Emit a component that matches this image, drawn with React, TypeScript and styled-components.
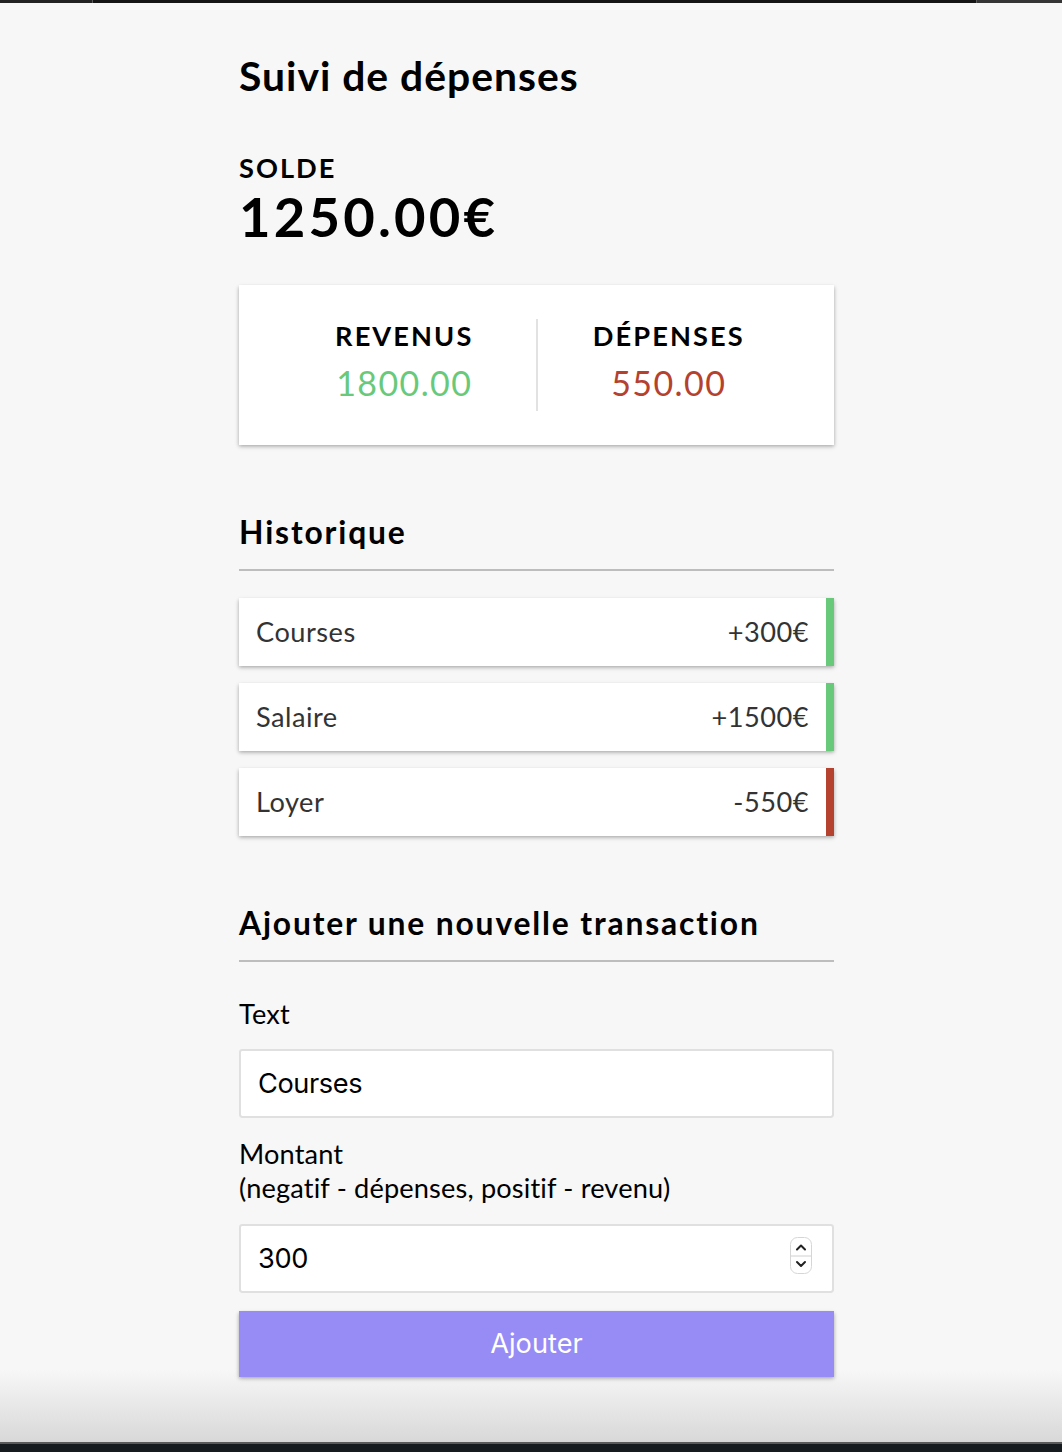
import React from 'react';
import styled, { createGlobalStyle } from 'styled-components';

const GlobalStyle = createGlobalStyle`
  * { box-sizing: border-box; }
  html, body { margin: 0; padding: 0; }
  body {
    background: #f7f7f7;
    font-family: Lato, "Noto Sans", sans-serif;
    color: #000;
  }
  input::-webkit-outer-spin-button,
  input::-webkit-inner-spin-button { -webkit-appearance: none; margin: 0; }
`;

const Page = styled.div`
  min-height: 1452px;
  display: flex;
  flex-direction: column;
`;

const TopBar = styled.div`
  height: 3px;
  flex-shrink: 0;
  display: flex;
  background: #151515;
`;

const TopSeg = styled.div<{ $w?: number; $c: string; $edge?: 'left' | 'right' }>`
  height: 100%;
  background: ${(p) => p.$c};
  ${(p) => (p.$w ? `width: ${p.$w}px; flex-shrink: 0;` : 'flex: 1;')}
  ${(p) => (p.$edge === 'left' ? 'border-right: 1px solid #5a5a5a;' : '')}
  ${(p) => (p.$edge === 'right' ? 'border-left: 1px solid #5a5a5a;' : '')}
`;

const Main = styled.main`
  flex: 1;
  padding-left: 11px;
  background: linear-gradient(
    to bottom,
    #f7f7f7 0,
    #f7f7f7 calc(100% - 72px),
    #d8d8d8 100%
  );
`;

const BottomBar = styled.div`
  height: 10px;
  flex-shrink: 0;
  background: #161b20;
  border-top: 2px solid #5a5a5a;
`;

const Container = styled.div`
  width: 595px;
  margin: 0 auto;
  padding: 48px 0 40px;
`;

const Title = styled.h2`
  margin: 0;
  font-size: 40.8px;
  line-height: 49px;
  font-weight: 700;
  letter-spacing: 1px;
`;

const BalanceLabel = styled.h4`
  margin: 51px 0 0;
  font-size: 27.2px;
  line-height: 33px;
  font-weight: 700;
  text-transform: uppercase;
  letter-spacing: 2px;
`;

const Balance = styled.h1`
  margin: 0;
  font-size: 54.4px;
  line-height: 65px;
  letter-spacing: 3.2px;
  font-weight: 700;
`;

const shadow = '0 1.7px 5.1px rgba(0, 0, 0, 0.12), 0 1.7px 3.4px rgba(0, 0, 0, 0.24)';

const Card = styled.div`
  margin-top: 36px;
  background: #fff;
  box-shadow: ${shadow};
  padding: 34px;
  display: flex;
`;

const Stat = styled.div<{ $divider?: boolean }>`
  flex: 1;
  text-align: center;
  border-right: ${(p) => (p.$divider ? '2px solid #e2e2e2' : 'none')};
`;

const StatLabel = styled.h4`
  margin: 0;
  font-size: 27.2px;
  line-height: 34px;
  font-weight: 700;
  text-transform: uppercase;
  letter-spacing: 2.1px;
`;

const Money = styled.p<{ $tone: 'plus' | 'minus' }>`
  margin: 8.5px 0;
  font-size: 34px;
  line-height: 41px;
  letter-spacing: 1.4px;
  color: ${(p) => (p.$tone === 'plus' ? '#69c97b' : '#b5412f')};
`;

const SectionTitle = styled.h3`
  margin: 68px 0 0;
  font-size: 31.8px;
  line-height: 38px;
  font-weight: 700;
  padding-bottom: 18px;
  border-bottom: 2px solid #bdbdbd;
  letter-spacing: 1.85px;
`;

const List = styled.ul`
  list-style: none;
  padding: 0;
  margin: 27px 0 0;
  display: flex;
  flex-direction: column;
  gap: 17px;
`;

const Item = styled.li<{ $tone: 'plus' | 'minus' }>`
  height: 68px;
  background: #fff;
  box-shadow: ${shadow};
  color: #333;
  display: flex;
  justify-content: space-between;
  align-items: center;
  padding: 0 17px;
  font-size: 27.2px;
  line-height: 34px;
  letter-spacing: 0.5px;
  border-right: 8.5px solid ${(p) => (p.$tone === 'plus' ? '#69c97b' : '#b5412f')};
`;

const Form = styled.form`
  margin: 0;
`;

const Label = styled.label<{ $mt: number; $mb: number }>`
  display: block;
  margin: ${(p) => p.$mt}px 0 ${(p) => p.$mb}px;
  font-size: 27.2px;
  line-height: 33.3px;
  letter-spacing: 0.15px;
`;

const Input = styled.input`
  display: block;
  width: 100%;
  height: 69px;
  border: 2px solid #e0e0e0;
  border-radius: 3.4px;
  padding: 0 17px;
  font-family: Inter, "Noto Sans", sans-serif;
  font-size: 27.2px;
  letter-spacing: -0.4px;
  color: #000;
  background: #fff;
  outline: none;
  -moz-appearance: textfield;
`;

const NumberWrap = styled.div`
  position: relative;
`;

const Spinner = styled.svg`
  position: absolute;
  right: 22px;
  top: 13px;
  width: 22px;
  height: 37px;
  pointer-events: none;
`;

const Button = styled.button`
  display: block;
  width: 100%;
  height: 66px;
  margin-top: 18px;
  border: 0;
  background: #978bf6;
  color: #fff;
  font-family: Inter, "Noto Sans", sans-serif;
  font-size: 27.2px;
  box-shadow: ${shadow};
  cursor: pointer;
`;

const transactions: { text: string; amount: string; tone: 'plus' | 'minus' }[] = [
  { text: 'Courses', amount: '+300€', tone: 'plus' },
  { text: 'Salaire', amount: '+1500€', tone: 'plus' },
  { text: 'Loyer', amount: '-550€', tone: 'minus' },
];

export default function App() {
  return (
    <>
      <GlobalStyle />
      <Page>
        <TopBar>
          <TopSeg $w={93} $c="#232323" $edge="left" />
          <TopSeg $c="#151515" />
          <TopSeg $w={86} $c="#353535" $edge="right" />
        </TopBar>
        <Main>
          <Container>
            <Title>Suivi de dépenses</Title>
            <BalanceLabel>Solde</BalanceLabel>
            <Balance>1250.00€</Balance>
            <Card>
              <Stat $divider>
                <StatLabel>Revenus</StatLabel>
                <Money $tone="plus">1800.00</Money>
              </Stat>
              <Stat>
                <StatLabel>Dépenses</StatLabel>
                <Money $tone="minus">550.00</Money>
              </Stat>
            </Card>

            <SectionTitle>Historique</SectionTitle>
            <List>
              {transactions.map((t) => (
                <Item key={t.text} $tone={t.tone}>
                  <span>{t.text}</span>
                  <span>{t.amount}</span>
                </Item>
              ))}
            </List>

            <SectionTitle>Ajouter une nouvelle transaction</SectionTitle>
            <Form onSubmit={(e) => e.preventDefault()}>
              <Label $mt={35} $mb={19} htmlFor="text">Text</Label>
              <Input id="text" type="text" defaultValue="Courses" />
              <Label $mt={19} $mb={20} htmlFor="amount">
                Montant
                <br />
                (negatif - dépenses, positif - revenu)
              </Label>
              <NumberWrap>
                <Input id="amount" type="number" defaultValue="300" />
                <Spinner viewBox="0 0 22 37">
                  <rect x="0.5" y="0.5" width="21" height="36" rx="7" fill="#fff" stroke="#d6d6d6" />
                  <line x1="1" y1="19" x2="21" y2="19" stroke="#d0d0d0" strokeWidth="1" />
                  <polyline points="7,12.5 11,8.5 15,12.5" fill="none" stroke="#222" strokeWidth="2" strokeLinecap="round" strokeLinejoin="round" />
                  <polyline points="7,25 11,29 15,25" fill="none" stroke="#222" strokeWidth="2" strokeLinecap="round" strokeLinejoin="round" />
                </Spinner>
              </NumberWrap>
              <Button type="submit">Ajouter</Button>
            </Form>
          </Container>
        </Main>
        <BottomBar />
      </Page>
    </>
  );
}
